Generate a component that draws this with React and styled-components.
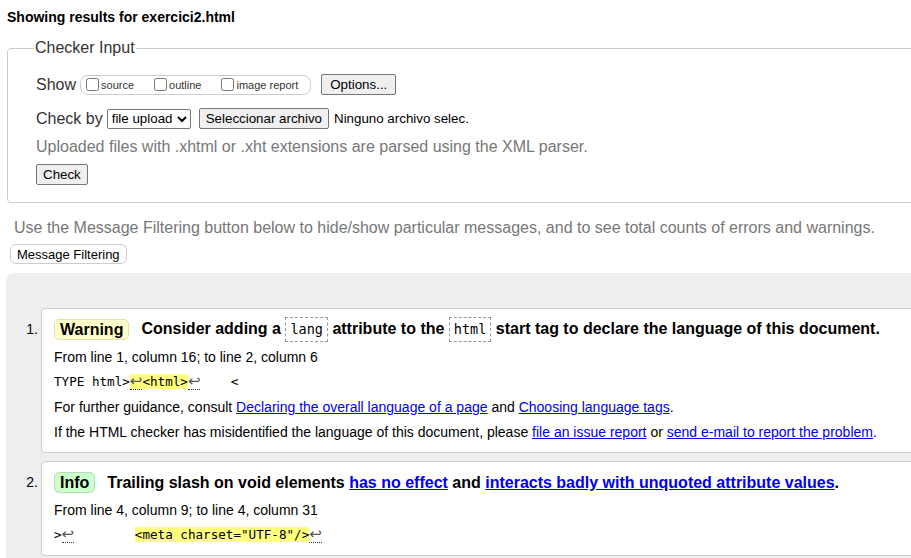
import React from "react";
import styled, { createGlobalStyle } from "styled-components";

const GlobalStyle = createGlobalStyle`
  html, body {
    margin: 0;
    padding: 0;
    overflow: hidden;
    background: #fff;
  }
  body {
    font-family: "Liberation Sans", Arial, sans-serif;
    color: #000;
  }
`;

const App = () => {
  return (
    <Page>
      <GlobalStyle />
      <Title>Showing results for exercici2.html</Title>
      <InputSet>
        <Legend>Checker Input</Legend>
        <FormRow>
          <RowLabel>Show</RowLabel>
          <CheckGroup>
            <CheckItem>
              <Box type="checkbox" />
              source
            </CheckItem>
            <CheckItem>
              <Box type="checkbox" />
              outline
            </CheckItem>
            <CheckItem>
              <Box type="checkbox" />
              image report
            </CheckItem>
          </CheckGroup>
          <Button $ml={10} $px={8}>Options...</Button>
        </FormRow>
        <FormRow $mt={13}>
          <RowLabel>Check by</RowLabel>
          <Select defaultValue="file">
            <option value="file">file upload</option>
          </Select>
          <Button $ml={8}>Seleccionar archivo</Button>
          <FileName>Ninguno archivo selec.</FileName>
        </FormRow>
        <Hint>Uploaded files with .xhtml or .xht extensions are parsed using the XML parser.</Hint>
        <FormRow $mt={8}>
          <Button>Check</Button>
        </FormRow>
      </InputSet>

      <FilterNote>
        Use the Message Filtering button below to hide/show particular messages, and to see total counts of errors and warnings.
      </FilterNote>
      <FilterButton>Message Filtering</FilterButton>

      <Results>
        <MessageList>
          <Message>
            <Num>1.</Num>
            <Card>
              <Heading>
                <Badge $kind="warning">Warning</Badge>
                <span>
                  Consider adding a <Code>lang</Code> attribute to the <Code>html</Code> start tag to declare the language of this document.
                </span>
              </Heading>
              <Location>From line 1, column 16; to line 2, column 6</Location>
              <Extract>
                TYPE html&gt;<Mark><Lf>↩</Lf>&lt;html&gt;</Mark><Lf>↩</Lf>{"    <"}
              </Extract>
              <Note>
                For further guidance, consult <Link>Declaring the overall language of a page</Link> and{" "}
                <Link>Choosing language tags</Link>.
              </Note>
              <Note>
                If the HTML checker has misidentified the language of this document, please{" "}
                <Link>file an issue report</Link> or <Link>send e-mail to report the problem</Link>.
              </Note>
            </Card>
          </Message>
          <Message>
            <Num>2.</Num>
            <Card>
              <Heading>
                <Badge $kind="info">Info</Badge>
                <span>
                  Trailing slash on void elements <Link>has no effect</Link> and{" "}
                  <Link>interacts badly with unquoted attribute values</Link>.
                </span>
              </Heading>
              <Location>From line 4, column 9; to line 4, column 31</Location>
              <Extract>
                &gt;<Lf>↩</Lf>{"        "}<Mark>&lt;meta charset="UTF-8"/&gt;</Mark><Lf>↩</Lf>
              </Extract>
            </Card>
          </Message>
        </MessageList>
      </Results>
    </Page>
  );
};

export default App;

const Page = styled.div`
  width: 960px;
  padding: 8px 0 0 7px;
  box-sizing: border-box;
`;

const Title = styled.h2`
  margin: 0;
  font-size: 14px;
  line-height: 18px;
  font-weight: bold;
  color: #000;
`;

const InputSet = styled.fieldset`
  margin: 13px 0 0 0;
  padding: 17px 28px 17px 28px;
  border: 1px solid #ccc;
  border-radius: 4px;
  color: #333;
`;

const Legend = styled.legend`
  font-size: 16px;
  color: #333;
  padding: 0 1px;
  margin-left: -2px;
`;

const FormRow = styled.div`
  display: flex;
  align-items: center;
  margin-top: ${(p) => p.$mt || 0}px;
`;

const RowLabel = styled.span`
  font-size: 16px;
  color: #333;
  margin-right: 4px;
`;

const CheckGroup = styled.span`
  display: inline-flex;
  align-items: center;
  gap: 14px;
  height: 18px;
  padding: 0 6px 0 5px;
  border: 1px solid #ccc;
  border-radius: 8px;
`;

const CheckItem = styled.label`
  display: inline-flex;
  align-items: center;
  font-size: 11px;
  color: #333;
  padding-right: 6px;
`;

const Box = styled.input`
  width: 13px;
  height: 13px;
  margin: 0 2px 0 0;
`;

const Button = styled.button`
  font-family: "Liberation Sans", Arial, sans-serif;
  font-size: 13.33px;
  height: 21px;
  padding: 0 ${(p) => p.$px || 6}px;
  margin-left: ${(p) => p.$ml || 0}px;
  background: #efefef;
  color: #000;
  border: 1px solid #767676;
  border-radius: 2px;
`;

const Select = styled.select`
  font-family: "Liberation Sans", Arial, sans-serif;
  font-size: 13.33px;
  height: 20px;
  width: 84px;
  padding: 0;
  border: 1px solid #767676;
  border-radius: 2px;
  background: #fff;
  color: #000;
`;

const FileName = styled.span`
  font-size: 13.33px;
  color: #000;
  margin-left: 5px;
`;

const Hint = styled.p`
  margin: 8px 0 0 0;
  font-size: 16px;
  line-height: 19px;
  color: #777;
`;

const FilterNote = styled.p`
  margin: 15px 0 0 7px;
  font-size: 16px;
  line-height: 19px;
  color: #777;
`;

const FilterButton = styled.button`
  display: block;
  margin: 7px 0 0 3px;
  height: 20px;
  padding: 0 6px;
  font-family: "Liberation Sans", Arial, sans-serif;
  font-size: 13px;
  color: #000;
  background: #fff;
  border: 1px solid #ccc;
  border-radius: 6px;
`;

const Results = styled.div`
  margin: 9px 0 0 -1px;
  padding: 35px 0 20px 0;
  background: #eee;
  border-radius: 8px 0 0 0;
`;

const MessageList = styled.ol`
  list-style: none;
  margin: 0;
  padding: 0;
  display: flex;
  flex-direction: column;
  gap: 8px;
`;

const Message = styled.li`
  display: flex;
  align-items: flex-start;
`;

const Num = styled.span`
  width: 32px;
  padding-right: 3px;
  text-align: right;
  font-size: 14px;
  margin-top: 13px;
  flex: none;
`;

const Card = styled.div`
  flex: 1;
  background: #fff;
  border: 1px solid #ccc;
  border-radius: 4px;
  padding: 8px 12px 11px 12px;
`;

const Heading = styled.div`
  display: flex;
  align-items: center;
  gap: 12px;
  min-height: 25px;
  font-size: 16px;
  font-weight: bold;
  line-height: 21px;
  white-space: nowrap;
`;

const Badge = styled.span`
  display: inline-block;
  height: 21px;
  padding: 0 5px;
  box-sizing: border-box;
  line-height: 19px;
  border-radius: 5px;
  border: 1px solid ${(p) => (p.$kind === "info" ? "#b8deb8" : "#e2dfa8")};
  background: ${(p) => (p.$kind === "info" ? "#ccffcc" : "#ffffcc")};
`;

const Code = styled.code`
  display: inline-block;
  vertical-align: middle;
  font-family: "DejaVu Sans Mono", "Liberation Mono", monospace;
  font-weight: normal;
  font-size: 13.5px;
  line-height: 23px;
  padding: 0 4px;
  border: 1px dashed #999;
`;

const Location = styled.p`
  margin: 6px 0 0 0;
  font-size: 14px;
  line-height: 18px;
`;

const Extract = styled.p`
  margin: 7px 0 0 0;
  font-family: "DejaVu Sans Mono", "Liberation Mono", monospace;
  font-size: 12.6px;
  line-height: 18px;
  white-space: pre;
  color: #000;
`;

const Mark = styled.mark`
  background: #ffff80;
  color: #000;
`;

const Lf = styled.span`
  display: inline-block;
  font-family: "DejaVu Sans", sans-serif;
  font-size: 15px;
  line-height: 15px;
  color: #555;
  border-bottom: 1px dotted #333;
`;

const Note = styled.p`
  margin: 7px 0 0 0;
  font-size: 14px;
  line-height: 18px;
`;

const Link = styled.a`
  color: #00e;
  text-decoration: underline;
  cursor: pointer;
`;
